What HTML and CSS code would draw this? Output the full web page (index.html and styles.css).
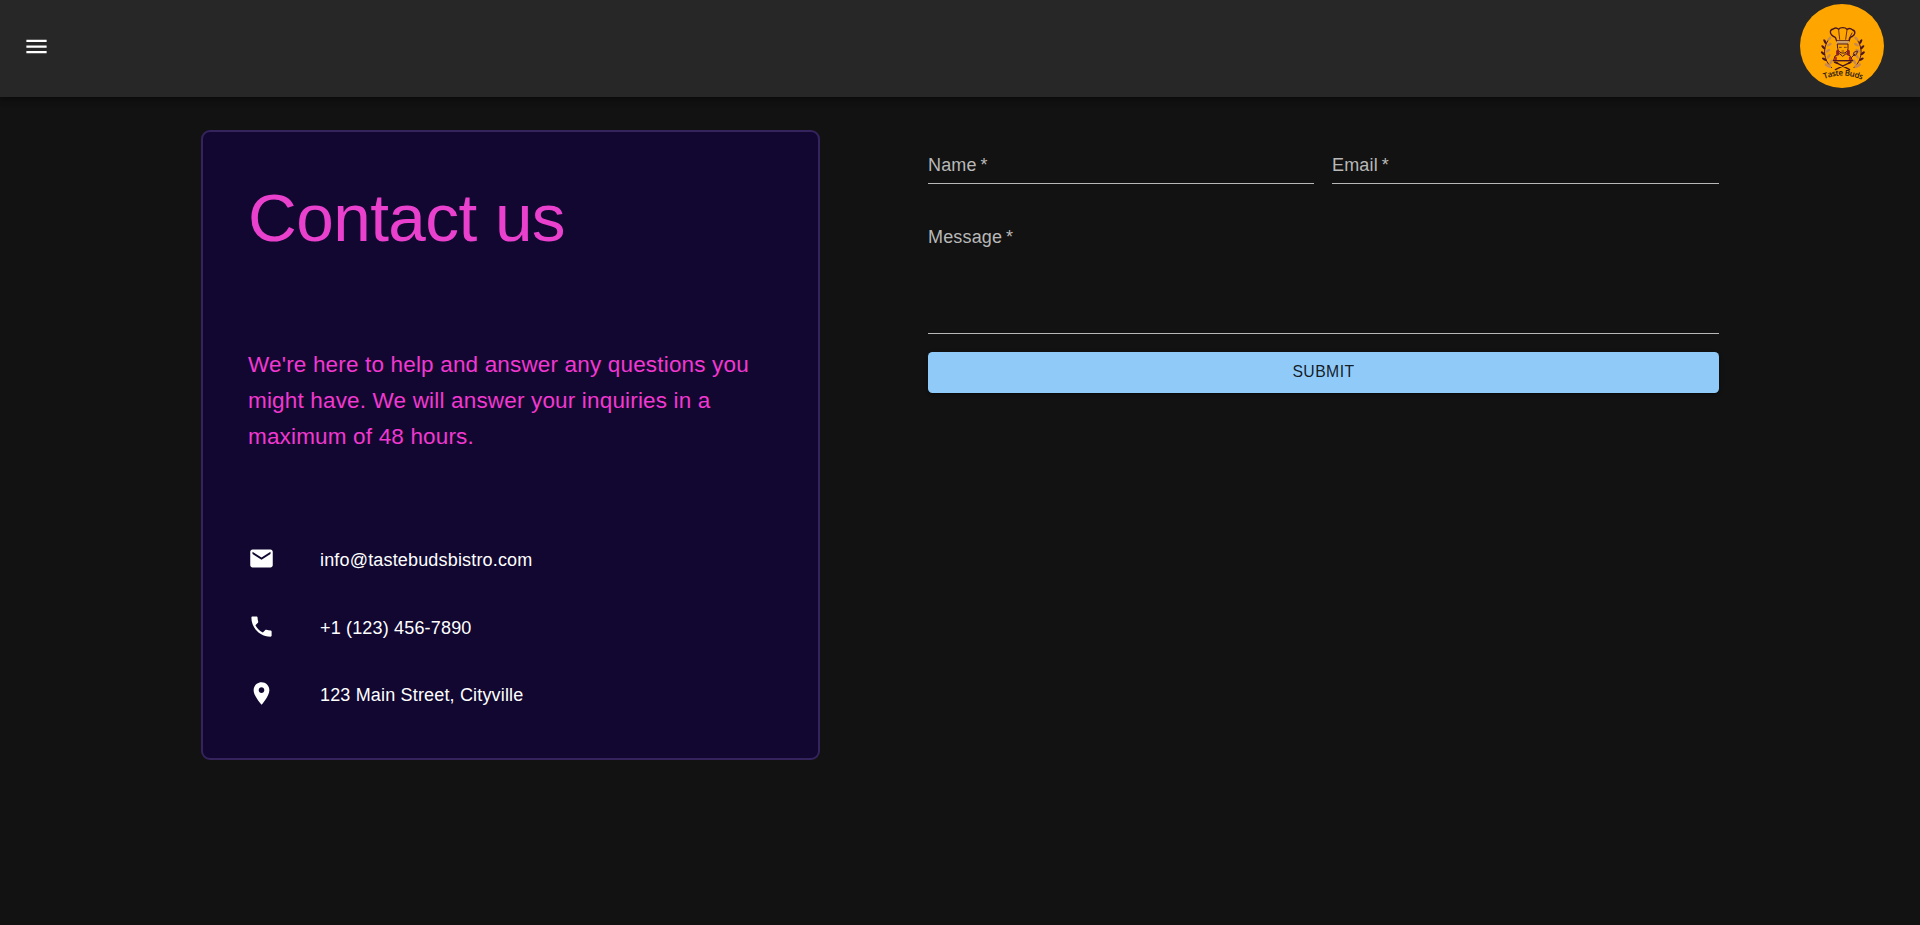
FILE: index.html
```html
<!DOCTYPE html>
<html lang="en">
<head>
<meta charset="utf-8">
<title>Contact us</title>
<link rel="stylesheet" href="styles.css">
</head>
<body>
<header class="appbar">
  <button class="menu" type="button" aria-label="menu">
    <svg class="icon" viewBox="0 0 24 24"><path d="M3 18h18v-2H3v2zm0-5h18v-2H3v2zm0-7v2h18V6H3z"/></svg>
  </button>
  <svg class="logo" viewBox="0 0 252 252" role="img" aria-label="Taste Buds">
    <defs>
      <path id="arc" d="M73 225 Q128 203 188 228"/>
      <g id="laurel">
        <path d="M96 192 C70 168 66 132 88 104" fill="none" stroke="#4a1720" stroke-width="3"/>
        <g fill="#c98a50">
          <ellipse cx="88" cy="104" rx="8" ry="4"  transform="rotate(-45 88 104)"/>
          <ellipse cx="88" cy="122" rx="8" ry="4" transform="rotate(-30 88 122)"/>
          <ellipse cx="84" cy="140" rx="8" ry="4" transform="rotate(-35 84 140)"/>
          <ellipse cx="86" cy="157" rx="8" ry="4" transform="rotate(-50 86 157)"/>
          <ellipse cx="93" cy="174" rx="8" ry="4" transform="rotate(-65 93 174)"/>
        </g>
        <g fill="#4a1720">
          <ellipse cx="75" cy="113" rx="8" ry="3.500" transform="rotate(60 75 113)"/>
          <ellipse cx="70" cy="130" rx="8" ry="3.500" transform="rotate(48 70 130)"/>
          <ellipse cx="69" cy="148" rx="8" ry="3.500" transform="rotate(38 69 148)"/>
          <ellipse cx="73" cy="166" rx="8" ry="3.500" transform="rotate(28 73 166)"/>
        </g>
        <ellipse cx="84" cy="185" rx="11" ry="4.500" fill="#c98a50" transform="rotate(28 84 185)"/>
      </g>
    </defs>
    <circle cx="126" cy="126" r="126" fill="#ffa500"/>
    <use href="#laurel"/>
    <use href="#laurel" transform="translate(257 0) scale(-1 1)"/>
    <g stroke="#4a1720" stroke-width="3" stroke-linejoin="round" stroke-linecap="round">
      <path d="M110 111 L106 100 C88 92 87 78 100 75 C106 70 112 72 116 76 C120 69 136 69 141 76 C147 72 153 73 158 78 C168 81 167 94 151 100 L147 111 Z" fill="#ffa500" stroke-width="4"/>
      <path d="M116 78 L119 106 M141 78 L137 106 M156 87 L147 105" fill="none" stroke-width="2.500"/>
      <path d="M110 111 H147 V119 H110 Z" fill="#c9a070" stroke="none"/>
      <path d="M113 120 H144 V134 C143 152 115 152 113 134 Z" fill="#ffa500"/>
      <path d="M118 130 H124 M133 130 H139 M126 141 H131" fill="none" stroke-width="2"/>
      <path d="M101 169 L105 156 L119 149 L128 157 L138 149 L151 156 L157 169 Z" fill="#ffa500"/>
      <path d="M113 142 V150 M145 142 V150" fill="none" stroke="#8c1f2b" stroke-width="9"/>
      <path d="M107 161 V167 M150 161 V167" fill="none" stroke="#b52631" stroke-width="7"/>
      <path d="M155 160 L164 151 M160 151 C161 141 167 143 172 141 C171 150 169 156 160 154" fill="#c98a50" stroke-width="3"/>
      <path d="M100 170 H158 M107 175 L149 197 M151 175 L106 197" fill="none" stroke-width="4"/>
      <path d="M104 175 L113 178 M146 178 L153 174" fill="none" stroke-width="5"/>
    </g>
    <text class="logo-text"><textPath href="#arc" textLength="116">Taste Buds</textPath></text>
  </svg>
</header>
<main class="page">
  <section class="card">
    <h1 class="title">Contact us</h1>
    <p class="intro">We're here to help and answer any questions you might have. We will answer your inquiries in a maximum of 48 hours.</p>
    <ul class="contacts">
      <li class="contact"><svg class="icon" viewBox="0 0 24 24"><path d="M20 4H4c-1.100 0-1.990.9-1.990 2L2 18c0 1.100.9 2 2 2h16c1.100 0 2-.9 2-2V6c0-1.100-.9-2-2-2zm0 4-8 5-8-5V6l8 5 8-5v2z"/></svg><span class="contact-text">info@tastebudsbistro.com</span></li>
      <li class="contact"><svg class="icon" viewBox="0 0 24 24"><path d="M6.620 10.790c1.440 2.830 3.760 5.140 6.590 6.590l2.200-2.200c.27-.27.67-.36 1.020-.24 1.120.37 2.330.57 3.570.57.55 0 1 .45 1 1V20c0 .55-.45 1-1 1-9.390 0-17-7.610-17-17 0-.55.45-1 1-1h3.500c.55 0 1 .45 1 1 0 1.250.2 2.450.57 3.570.11.35.03.74-.25 1.020l-2.200 2.200z"/></svg><span class="contact-text">+1 (123) 456-7890</span></li>
      <li class="contact"><svg class="icon" viewBox="0 0 24 24"><path d="M12 2C8.130 2 5 5.130 5 9c0 5.250 7 13 7 13s7-7.750 7-13c0-3.870-3.130-7-7-7zm0 9.500c-1.380 0-2.500-1.120-2.500-2.500s1.120-2.500 2.500-2.500 2.500 1.120 2.500 2.500-1.120 2.500-2.500 2.500z"/></svg><span class="contact-text">123 Main Street, Cityville</span></li>
    </ul>
  </section>
  <form class="form">
    <label class="field">Name&thinsp;*</label>
    <label class="field">Email&thinsp;*</label>
    <label class="field field-message">Message&thinsp;*</label>
    <button class="submit" type="button">SUBMIT</button>
  </form>
</main>
</body>
</html>
```
FILE: styles.css
```css
* {
  box-sizing: border-box;
}

body {
  margin: 0;
  min-height: 100vh;
  background: #121212;
  color: #fff;
  font: 18px/27px "Liberation Sans", Arial, sans-serif;
  letter-spacing: 0.00938em;
}

.appbar {
  display: flex;
  justify-content: space-between;
  align-items: flex-start;
  height: 97px;
  padding: 4px 36px 0 23px;
  background: #272727;
  box-shadow: 0 2px 4px -1px rgba(0, 0, 0, 0.2), 0 4px 5px rgba(0, 0, 0, 0.14), 0 1px 11px rgba(0, 0, 0, 0.12);
}

.menu {
  display: flex;
  margin-top: 29px;
  padding: 0;
  border: 0;
  background: none;
  color: #fff;
}

.icon {
  flex: none;
  width: 27px;
  height: 27px;
  fill: currentColor;
}

.logo {
  width: 84px;
  height: 84px;
}

.logo-text {
  fill: #241310;
  font: 600 24px "Open Sans", sans-serif;
}

.page {
  display: flex;
  align-items: flex-start;
  gap: 108px;
  padding: 33px 201px 0;
}

.card {
  flex: none;
  width: 619px;
  height: 630px;
  padding: 45px;
  border: 2px solid #35235d;
  border-radius: 9px;
  background: #110731;
}

.title {
  margin: 0 0 89px;
  color: #e940cd;
  font-size: 67.5px;
  font-weight: 400;
  line-height: 81px;
  letter-spacing: -0.00833em;
}

.intro {
  margin: 0 0 90px;
  color: #f138d0;
  font-size: 22.5px;
  line-height: 36px;
  letter-spacing: 0.0075em;
}

.contacts {
  display: flex;
  flex-direction: column;
  gap: 38.5px;
  margin: 0;
  padding: 0;
  list-style: none;
}

.contact {
  display: flex;
  gap: 45px;
  height: 29px;
}

.contact-text {
  padding-top: 2px;
}

.form {
  display: grid;
  flex: 1;
  grid-template-columns: 386px 1fr;
  gap: 18px;
  padding-top: 18px;
}

.field {
  height: 36px;
  padding-top: 4px;
  border-bottom: 1px solid #b8b8b8;
  color: #b8b8b8;
}

.field-message {
  grid-column: 1 / -1;
  height: 132px;
  padding-top: 22px;
}

.submit {
  grid-column: 1 / -1;
  height: 41px;
  padding: 0 0 2px;
  border: 0;
  border-radius: 4.5px;
  background: #90caf9;
  box-shadow: 0 3px 1px -2px rgba(0, 0, 0, 0.2), 0 2px 2px rgba(0, 0, 0, 0.14), 0 1px 5px rgba(0, 0, 0, 0.12);
  color: rgba(0, 0, 0, 0.87);
  font: 15.75px/27px "Liberation Sans", Arial, sans-serif;
  letter-spacing: 0.02857em;
}
```
